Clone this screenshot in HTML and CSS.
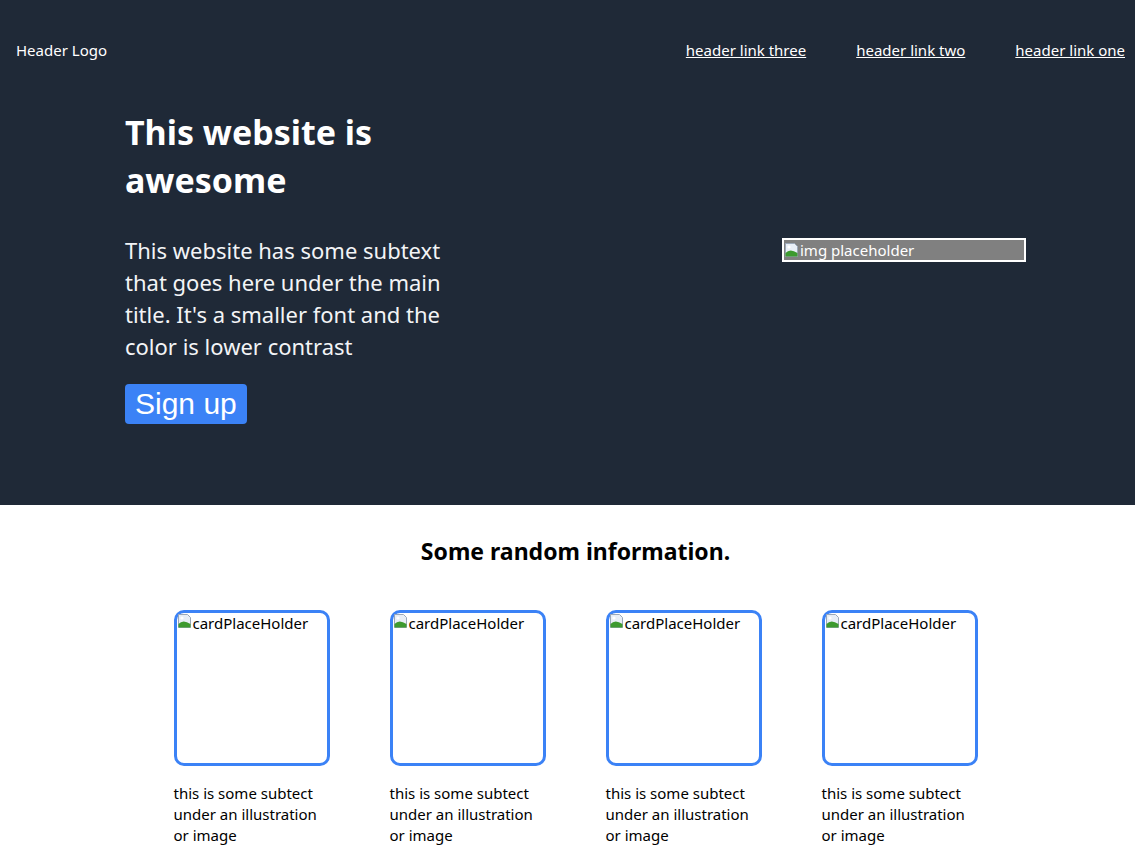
FILE: index.html
```html
<!DOCTYPE html>
<html>
<head>
<meta charset="utf-8">
<link rel="stylesheet" href="styles.css">
</head>
<body>
<div class="top">
  <header class="header">
    <div class="logo">Header Logo</div>
    <nav class="links">
      <a href="#">header link three</a>
      <a href="#">header link two</a>
      <a href="#">header link one</a>
    </nav>
  </header>
  <section class="hero">
    <div class="hero-text">
      <h1>This website is awesome</h1>
      <p>This website has some subtext that goes here under the main title. It's a smaller font and the color is lower contrast</p>
      <button class="signup">Sign up</button>
    </div>
    <div class="hero-img">
      <svg class="broken" width="16" height="16" viewBox="0 0 16 16"><path d="M1.5 1.5h9l3 3v10h-12z" fill="#e8eef6" stroke="#9aa7b8"/><path d="M1.5 14.5 L1.5 11 Q6 6 13.5 11 L13.5 14.5z" fill="#3d9a2f"/><circle cx="5" cy="5" r="1.6" fill="#fff"/></svg><span>img placeholder</span>
    </div>
  </section>
</div>
<section class="info">
  <h2>Some random information.</h2>
  <div class="cards">
    <div class="card">
      <div class="card-img"><svg class="broken" width="16" height="16" viewBox="0 0 16 16"><path d="M1.5 1.5h9l3 3v10h-12z" fill="#e8eef6" stroke="#9aa7b8"/><path d="M1.5 14.5 L1.5 11 Q6 6 13.5 11 L13.5 14.5z" fill="#3d9a2f"/><circle cx="5" cy="5" r="1.6" fill="#fff"/></svg><span>cardPlaceHolder</span></div>
      <p>this is some subtect under an illustration or image</p>
    </div>
    <div class="card">
      <div class="card-img"><svg class="broken" width="16" height="16" viewBox="0 0 16 16"><path d="M1.5 1.5h9l3 3v10h-12z" fill="#e8eef6" stroke="#9aa7b8"/><path d="M1.5 14.5 L1.5 11 Q6 6 13.5 11 L13.5 14.5z" fill="#3d9a2f"/><circle cx="5" cy="5" r="1.6" fill="#fff"/></svg><span>cardPlaceHolder</span></div>
      <p>this is some subtect under an illustration or image</p>
    </div>
    <div class="card">
      <div class="card-img"><svg class="broken" width="16" height="16" viewBox="0 0 16 16"><path d="M1.5 1.5h9l3 3v10h-12z" fill="#e8eef6" stroke="#9aa7b8"/><path d="M1.5 14.5 L1.5 11 Q6 6 13.5 11 L13.5 14.5z" fill="#3d9a2f"/><circle cx="5" cy="5" r="1.6" fill="#fff"/></svg><span>cardPlaceHolder</span></div>
      <p>this is some subtect under an illustration or image</p>
    </div>
    <div class="card">
      <div class="card-img"><svg class="broken" width="16" height="16" viewBox="0 0 16 16"><path d="M1.5 1.5h9l3 3v10h-12z" fill="#e8eef6" stroke="#9aa7b8"/><path d="M1.5 14.5 L1.5 11 Q6 6 13.5 11 L13.5 14.5z" fill="#3d9a2f"/><circle cx="5" cy="5" r="1.6" fill="#fff"/></svg><span>cardPlaceHolder</span></div>
      <p>this is some subtect under an illustration or image</p>
    </div>
  </div>
</section>
</body>
</html>
```
FILE: styles.css
```css
html, body {
  margin: 0;
  padding: 0;
}
body {
  font-family: "Noto Sans", "Open Sans", sans-serif;
  background: #ffffff;
  color: #000;
}
.top {
  background: #1f2937;
  color: #ffffff;
  padding-bottom: 81px;
}
.header {
  display: flex;
  justify-content: space-between;
  align-items: center;
  height: 100px;
  padding: 0 10px 0 16px;
  font-size: 15px;
}
.links {
  display: flex;
  gap: 50px;
}
.links a {
  color: #ffffff;
  text-decoration: underline;
}
.hero {
  display: flex;
  align-items: flex-start;
  padding: 8px 0 0 125px;
}
.hero-text {
  width: 345px;
}
.hero-text h1 {
  margin: 0;
  font-size: 34px;
  line-height: 48px;
  font-weight: 700;
  color: #ffffff;
}
.hero-text p {
  margin: 30px 0 22px;
  font-size: 22px;
  line-height: 32px;
  color: #f3f4f6;
}
.signup {
  display: block;
  background: #3b82f6;
  color: #fff;
  border: none;
  border-radius: 4px;
  font-family: "Liberation Sans", Arial, sans-serif;
  font-size: 30px;
  height: 40px;
  padding: 0 10px;
  line-height: 40px;
}
.hero-img {
  margin: 130px 0 0 312px;
  width: 240px;
  height: 20px;
  background: #808080;
  border: 2px solid #ffffff;
  display: flex;
  align-items: center;
  font-size: 15px;
  color: #ffffff;
  line-height: 20px;
}
.broken {
  flex: none;
}
.info {
  padding: 30px 0 0 16px;
  text-align: center;
}
.info h2 {
  margin: 0 0 43px;
  font-size: 23px;
  line-height: 32px;
  font-weight: 700;
}
.cards {
  display: flex;
  justify-content: center;
  gap: 60px;
}
.card {
  width: 156px;
  text-align: left;
}
.card-img {
  box-sizing: border-box;
  width: 156px;
  height: 156px;
  border: 3px solid #3b82f6;
  border-radius: 10px;
  display: flex;
  align-items: flex-start;
  font-size: 15px;
  line-height: 20px;
  padding: 0;
}
.card p {
  margin: 17px 0 0;
  font-size: 15px;
  line-height: 21px;
}
```
